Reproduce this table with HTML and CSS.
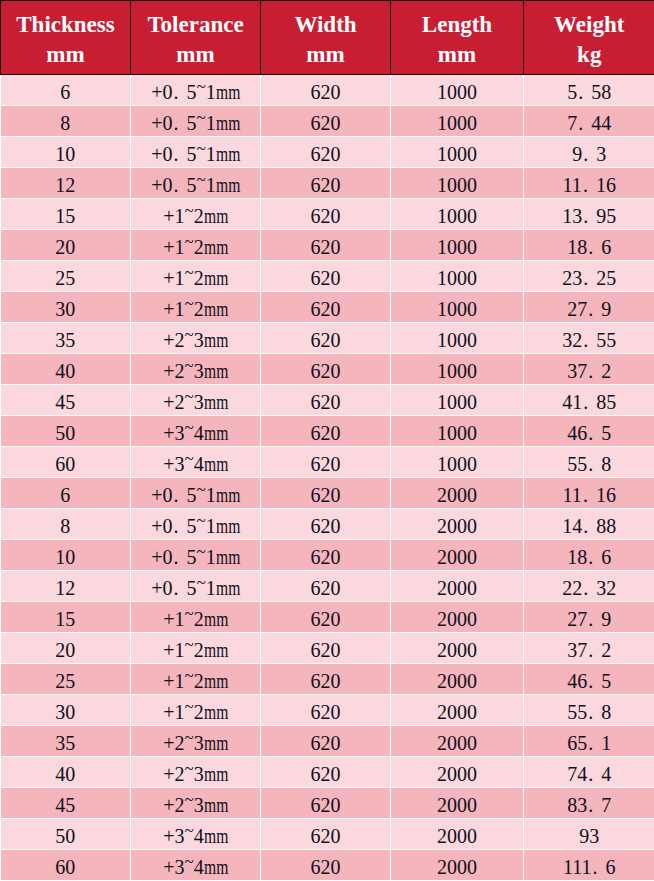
FILE: index.html
```html
<!DOCTYPE html>
<html>
<head>
<meta charset="utf-8">
<link rel="stylesheet" href="styles.css">
</head>
<body>
<table class="spec">
<colgroup><col class="c1"><col class="c2"><col class="c3"><col class="c4"><col class="c5"></colgroup>
<thead>
<tr><th>Thickness<br>mm</th><th>Tolerance<br>mm</th><th>Width<br>mm</th><th>Length<br>mm</th><th>Weight<br>kg</th></tr>
</thead>
<tbody id="rows"></tbody>
</table>
<script src="script.js"></script>
</body>
</html>
```
FILE: styles.css
```css
html, body { margin: 0; padding: 0; background: #fff; }
.spec {
  border-collapse: collapse;
  width: 654px;
  table-layout: fixed;
  font-family: "Liberation Serif", "Times New Roman", serif;
}
.c1 { width: 130px; }
.c2 { width: 130px; }
.c3 { width: 130px; }
.c4 { width: 133px; }
.c5 { width: 131px; }
.spec th {
  background: #c81e33;
  color: #fff;
  font-weight: bold;
  font-size: 23px;
  line-height: 30px;
  height: 74px;
  box-sizing: border-box;
  padding: 4px 0 0;
  border: 1px solid #1a0a0a;
  text-align: center;
  vertical-align: middle;
}
.spec th:last-child { border-right: 0; }
.spec td {
  height: 31px;
  box-sizing: border-box;
  padding: 4px 0 0;
  border: 1px solid #fff;
  text-align: center;
  vertical-align: middle;
  font-size: 20px;
  color: #10101e;
  line-height: 26px;
}
.spec td span { line-height: 1; }
.spec td:first-child { border-left: 0; }
.spec td:last-child { border-right: 0; }
.spec tbody tr:first-child td { border-top: 0; }
.spec tr.odd td { background: #fad8dd; }
.spec tr.even td { background: #f4b5bc; }
.mm { display: inline-block; transform: scaleX(0.78); transform-origin: left center; margin-right: -7px; }
.til { position: relative; top: -7px; font-size: 17px; }
.dot { display: inline-block; width: 13px; text-align: left; padding-left: 1px; }
```
FILE: script.js
```js
var th = [6,8,10,12,15,20,25,30,35,40,45,50,60];
var tol = ["0.5~1","0.5~1","0.5~1","0.5~1","1~2","1~2","1~2","1~2","2~3","2~3","2~3","3~4","3~4"];
var w1 = ["5.58","7.44","9.3","11.16","13.95","18.6","23.25","27.9","32.55","37.2","41.85","46.5","55.8"];
var w2 = ["11.16","14.88","18.6","22.32","27.9","37.2","46.5","55.8","65.1","74.4","83.7","93","111.6"];
function fmt(s){ return s.replace(/\./g, '<span class="dot">.</span>'); }
function tolFmt(s){
  var p = s.split("~");
  return "+" + fmt(p[0]) + '<span class="til">~</span>' + p[1] + '<span class="mm">mm</span>';
}
var html = "";
var k = 0;
[[1000,w1],[2000,w2]].forEach(function(g){
  for (var i=0;i<th.length;i++){
    html += '<tr class="' + (k%2===0?'odd':'even') + '"><td>' + th[i] + '</td><td>' + tolFmt(tol[i]) + '</td><td>620</td><td>' + g[0] + '</td><td>' + fmt(g[1][i]) + '</td></tr>';
    k++;
  }
});
document.getElementById("rows").innerHTML = html;
```
